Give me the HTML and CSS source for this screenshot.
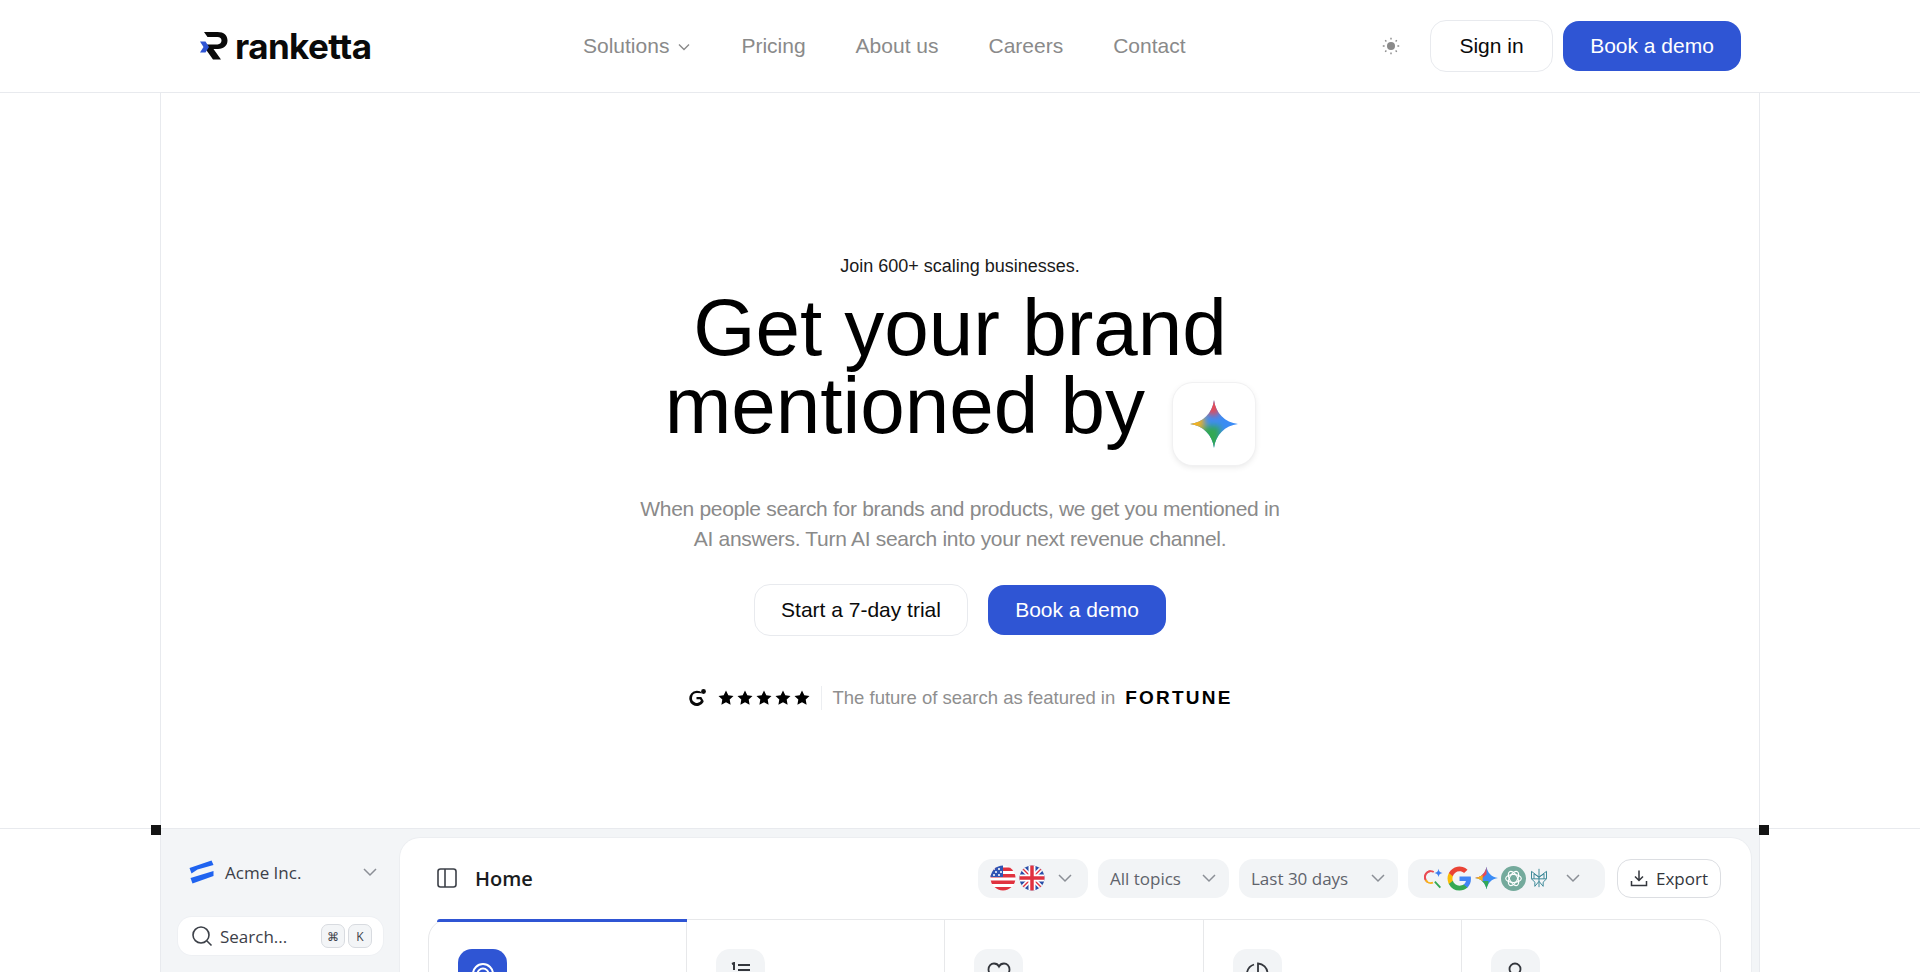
FILE: index.html
```html
<!DOCTYPE html>
<html lang="en">
<head>
<meta charset="utf-8">
<title>Ranketta</title>
<link rel="stylesheet" href="styles.css">
</head>
<body>
<header class="site-header">
  <div class="header-inner">
    <a class="logo" href="#">
      <svg class="logo-mark" viewBox="0 0 28 28" width="28" height="28" aria-hidden="true">
        <path d="M4 0H17.5C24 0 27.5 3.4 27.5 8.6C27.5 13.6 24 17 18 17H13.5L21 27.5H13L4.5 15.5V12.4H17.5C20 12.4 21.5 11 21.5 8.6C21.5 6.3 20 5 17.5 5H7.5Z" fill="#0a0a0a"/>
        <path d="M0 9.5H5.5L9 15L5.5 20.5H0L3.5 15Z" fill="#2f55d4"/>
      </svg>
      <span class="logo-text">ranketta</span>
    </a>
    <nav class="main-nav">
      <a href="#" class="nav-link">Solutions
        <svg class="nav-chevron" viewBox="0 0 14 14" width="14" height="14"><path d="M2 4.5L7 9.5L12 4.5" fill="none" stroke="#8a8a8a" stroke-width="1.4"/></svg>
      </a>
      <a href="#" class="nav-link">Pricing</a>
      <a href="#" class="nav-link">About us</a>
      <a href="#" class="nav-link">Careers</a>
      <a href="#" class="nav-link">Contact</a>
    </nav>
    <div class="header-actions">
      <svg class="sun" viewBox="0 0 18 18" width="18" height="18" aria-hidden="true">
        <circle cx="9" cy="9" r="4" fill="#8a8a8a"/>
        <path d="M9 .8V2.6M9 15.4V17.2M.8 9H2.6M15.4 9H17.2M3.2 3.2L4.4 4.4M13.6 13.6L14.8 14.8M3.2 14.8L4.4 13.6M13.6 4.4L14.8 3.2" stroke="#8a8a8a" stroke-width="1.4" fill="none"/>
      </svg>
      <a href="#" class="btn btn-outline btn-signin">Sign in</a>
      <a href="#" class="btn btn-primary">Book a demo</a>
    </div>
  </div>
</header>

<main>
  <section class="hero">
    <p class="eyebrow">Join 600+ scaling businesses.</p>
    <h1 class="headline">Get your brand<br>mentioned by <span class="gem-tile">
      <svg viewBox="0 0 48 48" width="48" height="48" aria-hidden="true">
        <defs>
          <clipPath id="gemclip"><path d="M24 0C25.500 13 35 22.500 48 24C35 25.500 25.500 35 24 48C22.500 35 13 25.500 0 24C13 22.500 22.500 13 24 0Z"/></clipPath>
          <filter id="gemblur" x="-30%" y="-30%" width="160%" height="160%"><feGaussianBlur stdDeviation="3"/></filter>
        </defs>
        <g clip-path="url(#gemclip)">
          <rect width="48" height="48" fill="#3b8cf5"/>
          <g filter="url(#gemblur)">
            <rect x="-4" y="-4" width="28" height="20" fill="#ea4a52" transform="rotate(20 24 24)"/>
            <rect x="-6" y="15" width="20" height="18" fill="#f6b21b"/>
            <rect x="10" y="26" width="20" height="26" fill="#33a853"/>
          </g>
        </g>
      </svg>
    </span></h1>
    <p class="lede">When people search for brands and products, we get you mentioned in AI answers. Turn AI search into your next revenue channel.</p>
    <div class="cta-row">
      <a href="#" class="btn btn-outline btn-trial">Start a 7-day trial</a>
      <a href="#" class="btn btn-primary">Book a demo</a>
    </div>
    <div class="proof">
      <svg class="g2" viewBox="0 0 20 20" width="20" height="20" aria-hidden="true">
        <path d="M15.500 5.200A7.600 7.600 0 1 0 16.700 13.700L14.300 12.200A4.900 4.900 0 1 1 10 5.100Z" fill="#0a0a0a"/>
        <path d="M10 11H14.800L17.400 15.500H14.900L13.500 13.300H10Z" fill="#0a0a0a" transform="translate(-.5 -2)"/>
        <circle cx="16.500" cy="3.500" r="2.400" fill="#0a0a0a"/>
      </svg>
      <div class="stars" aria-label="5 stars">
        <svg viewBox="0 0 16 16" width="16" height="16"><path class="star" d="M8 .6L10.300 5.300L15.500 6L11.700 9.600L12.600 14.800L8 12.300L3.400 14.800L4.300 9.600L.5 6L5.700 5.300Z"/></svg>
        <svg viewBox="0 0 16 16" width="16" height="16"><path class="star" d="M8 .6L10.300 5.300L15.500 6L11.700 9.600L12.600 14.800L8 12.300L3.400 14.800L4.300 9.600L.5 6L5.700 5.300Z"/></svg>
        <svg viewBox="0 0 16 16" width="16" height="16"><path class="star" d="M8 .6L10.300 5.300L15.500 6L11.700 9.600L12.600 14.800L8 12.300L3.400 14.800L4.300 9.600L.5 6L5.700 5.300Z"/></svg>
        <svg viewBox="0 0 16 16" width="16" height="16"><path class="star" d="M8 .6L10.300 5.300L15.500 6L11.700 9.600L12.600 14.800L8 12.300L3.400 14.800L4.300 9.600L.5 6L5.700 5.300Z"/></svg>
        <svg viewBox="0 0 16 16" width="16" height="16"><path class="star" d="M8 .6L10.300 5.300L15.500 6L11.700 9.600L12.600 14.800L8 12.300L3.400 14.800L4.300 9.600L.5 6L5.700 5.300Z"/></svg>
      </div>
      <span class="proof-text">The future of search as featured in</span>
      <span class="fortune">FORTUNE</span>
    </div>
  </section>

  <section class="dash-band">
    <span class="corner corner-l"></span>
    <span class="corner corner-r"></span>
    <div class="dash">
      <aside class="side">
        <div class="org">
          <svg viewBox="0 0 24 24" width="25" height="24" aria-hidden="true">
            <path d="M0 8L22 0.500L24 5L8 9.500L2 13.500Z" fill="#1f63f0"/>
            <path d="M1 18L24 11L24 16L3 23.500Z" fill="#1f63f0"/>
          </svg>
          <span class="org-name">Acme Inc.</span>
          <svg class="chev" viewBox="0 0 16 16" width="16" height="16"><path d="M2 5L8 11L14 5" fill="none" stroke="#8b8f96" stroke-width="1.500"/></svg>
        </div>
        <div class="search">
          <svg viewBox="0 0 22 22" width="22" height="22" aria-hidden="true"><circle cx="10" cy="10" r="8" fill="none" stroke="#3c4048" stroke-width="1.600"/><path d="M16 16L20.500 20.500" stroke="#3c4048" stroke-width="1.600"/></svg>
          <span class="search-label">Search...</span>
          <span class="kbd">⌘</span>
          <span class="kbd">K</span>
        </div>
      </aside>
      <div class="panel">
        <div class="panel-top">
          <svg class="panel-ic" viewBox="0 0 20 22" width="20" height="22" aria-hidden="true"><rect x="1" y="2" width="18" height="18" rx="2.500" fill="none" stroke="#3c4048" stroke-width="1.600"/><path d="M8 2V20" stroke="#3c4048" stroke-width="1.600"/></svg>
          <span class="panel-title">Home</span>
          <div class="filters">
            <div class="pill pill-flags">
              <svg viewBox="0 0 26 26" width="26" height="26" aria-hidden="true">
                <defs><clipPath id="flagc"><circle cx="13" cy="13" r="12.500"/></clipPath></defs>
                <g clip-path="url(#flagc)">
                  <rect width="26" height="26" fill="#fff"/>
                  <path d="M0 2.500H26V6H0ZM0 9H26V12.500H0ZM0 15.500H26V19H0ZM0 22H26V26H0Z" fill="#e0323f"/>
                  <rect width="13" height="12" fill="#2f55b4"/>
                  <path d="M3 4H5M8 4H10M5 7H7M10 7H12M3 10H5M8 10H10" stroke="#fff" stroke-width="1.300"/>
                </g>
              </svg>
              <svg viewBox="0 0 26 26" width="26" height="26" aria-hidden="true">
                <defs><clipPath id="flagu"><circle cx="13" cy="13" r="12.500"/></clipPath></defs>
                <g clip-path="url(#flagu)">
                  <rect width="26" height="26" fill="#2a4fa8"/>
                  <path d="M0 0L26 26M26 0L0 26" stroke="#fff" stroke-width="4.500"/>
                  <path d="M0 0L26 26M26 0L0 26" stroke="#e0323f" stroke-width="1.400"/>
                  <path d="M13 0V26M0 13H26" stroke="#fff" stroke-width="7"/>
                  <path d="M13 0V26M0 13H26" stroke="#e0323f" stroke-width="3.500"/>
                </g>
              </svg>
              <svg class="chev" viewBox="0 0 16 16" width="16" height="16"><path d="M2 5L8 11L14 5" fill="none" stroke="#8b8f96" stroke-width="1.500"/></svg>
            </div>
            <div class="pill pill-topics">All topics <svg class="chev" viewBox="0 0 16 16" width="16" height="16"><path d="M2 5L8 11L14 5" fill="none" stroke="#8b8f96" stroke-width="1.500"/></svg></div>
            <div class="pill pill-days">Last 30 days <svg class="chev" viewBox="0 0 16 16" width="16" height="16"><path d="M2 5L8 11L14 5" fill="none" stroke="#8b8f96" stroke-width="1.500"/></svg></div>
            <div class="pill pill-engines">
              <svg viewBox="0 0 24 24" width="22" height="24" aria-hidden="true">
                <circle cx="9.500" cy="11" r="6.500" fill="none" stroke="#ea4a52" stroke-width="2" stroke-dasharray="20 21" transform="rotate(120 9.500 11)"/>
                <path d="M9.500 4.500A6.500 6.500 0 0 0 4 14" fill="none" stroke="#ea4a52" stroke-width="2"/>
                <path d="M4 14A6.500 6.500 0 0 0 12 17" fill="none" stroke="#f6b21b" stroke-width="2"/>
                <path d="M14 16L20 22.500" stroke="#33a853" stroke-width="2"/>
                <path d="M18 2C18.500 5 19.500 6 22.500 6.500C19.500 7 18.500 8 18 11C17.500 8 16.500 7 13.500 6.500C16.500 6 17.500 5 18 2Z" fill="#3b7cf0"/>
              </svg>
              <svg viewBox="0 0 24 24" width="25" height="25" aria-hidden="true">
                <path d="M23 12.300c0-.8-.1-1.600-.2-2.300H12v4.400h6.200a5.300 5.300 0 0 1-2.300 3.500v2.900h3.700c2.200-2 3.400-5 3.400-8.500Z" fill="#4285f4"/>
                <path d="M12 23.500c3.100 0 5.700-1 7.600-2.800l-3.700-2.900c-1 .7-2.300 1.100-3.900 1.100-3 0-5.500-2-6.400-4.700H1.800v3A11.500 11.500 0 0 0 12 23.500Z" fill="#34a853"/>
                <path d="M5.600 14.200a6.900 6.900 0 0 1 0-4.400v-3H1.800a11.500 11.500 0 0 0 0 10.400Z" fill="#fbbc05"/>
                <path d="M12 5.100c1.700 0 3.200.6 4.400 1.700l3.300-3.300A11.500 11.500 0 0 0 1.800 6.800l3.800 3C6.500 7.100 9 5.100 12 5.100Z" fill="#ea4335"/>
              </svg>
              <svg viewBox="0 0 24 24" width="23" height="24" aria-hidden="true">
                <defs>
                  <clipPath id="gemclip2"><path d="M12 0C12.800 6.500 17.500 11.200 24 12C17.500 12.800 12.800 17.500 12 24C11.200 17.500 6.500 12.800 0 12C6.500 11.200 11.200 6.500 12 0Z"/></clipPath>
                </defs>
                <g clip-path="url(#gemclip2)">
                  <rect width="24" height="24" fill="#3b8cf5"/>
                  <path d="M0 0H12V8L8 12H0Z" fill="#ea4a52"/>
                  <path d="M0 9H8V15H0Z" fill="#f6b21b"/>
                  <path d="M5 15H14V24H5Z" fill="#33a853"/>
                </g>
              </svg>
              <svg viewBox="0 0 24 24" width="25" height="25" aria-hidden="true">
                <circle cx="12" cy="12" r="12" fill="#74aa9c"/>
                <g fill="none" stroke="#fff" stroke-width="1.100">
                  <ellipse cx="12" cy="12" rx="7.500" ry="3.800"/>
                  <ellipse cx="12" cy="12" rx="7.500" ry="3.800" transform="rotate(60 12 12)"/>
                  <ellipse cx="12" cy="12" rx="7.500" ry="3.800" transform="rotate(120 12 12)"/>
                </g>
              </svg>
              <svg viewBox="0 0 24 24" width="20" height="24" aria-hidden="true">
                <path d="M12 1V23M3 4L12 11L21 4M3 4V13L7 17V22L12 16L17 22V17L21 13V4M12 11L6 7V13M12 11L18 7V13M3 13H21" fill="none" stroke="#3f8a99" stroke-width="1.200"/>
              </svg>
              <svg class="chev" viewBox="0 0 16 16" width="16" height="16"><path d="M2 5L8 11L14 5" fill="none" stroke="#8b8f96" stroke-width="1.500"/></svg>
            </div>
            <div class="export">
              <svg viewBox="0 0 18 18" width="18" height="18" aria-hidden="true"><path d="M9 1.500V11M5 7.500L9 11.500L13 7.500M1.500 12V16.500H16.500V12" fill="none" stroke="#33363c" stroke-width="1.500"/></svg>
              Export
            </div>
          </div>
        </div>
        <div class="tabs">
          <div class="tab tab-active">
            <span class="tile tile-blue">
              <svg viewBox="0 0 24 24" width="24" height="24" aria-hidden="true"><circle cx="12" cy="12" r="10" fill="none" stroke="#fff" stroke-width="2"/><circle cx="12" cy="12" r="5.500" fill="none" stroke="#fff" stroke-width="2"/><circle cx="12" cy="12" r="1.500" fill="#fff"/></svg>
            </span>
          </div>
          <div class="tab">
            <span class="tile">
              <svg viewBox="0 0 24 24" width="24" height="24" aria-hidden="true"><path d="M3 2L5 1V8M9 3H21M9 8H21" fill="none" stroke="#33363c" stroke-width="2"/></svg>
            </span>
          </div>
          <div class="tab">
            <span class="tile">
              <svg viewBox="0 0 24 24" width="24" height="24" aria-hidden="true"><path d="M12 21C5 16 1.500 12 1.500 7.500C1.500 4 4 1.500 7 1.500C9 1.500 11 2.500 12 4.500C13 2.500 15 1.500 17 1.500C20 1.500 22.500 4 22.500 7.500C22.500 12 19 16 12 21Z" fill="none" stroke="#33363c" stroke-width="1.800"/></svg>
            </span>
          </div>
          <div class="tab">
            <span class="tile">
              <svg viewBox="0 0 24 24" width="24" height="24" aria-hidden="true"><path d="M9 2.500A10 10 0 1 0 21.500 15M13 1.500A10 10 0 0 1 22.500 11H13Z" fill="none" stroke="#33363c" stroke-width="1.800"/></svg>
            </span>
          </div>
          <div class="tab">
            <span class="tile">
              <svg viewBox="0 0 24 24" width="24" height="24" aria-hidden="true"><circle cx="12" cy="7" r="5.500" fill="none" stroke="#33363c" stroke-width="1.800"/><path d="M3 22C3 17 7 14 12 14C17 14 21 17 21 22" fill="none" stroke="#33363c" stroke-width="1.800"/></svg>
            </span>
          </div>
        </div>
      </div>
    </div>
  </section>
</main>
</body>
</html>
```
FILE: styles.css
```css
* { box-sizing: border-box; }
html, body { margin: 0; height: 972px; overflow: hidden; background: #fff; }
body { font-family: "Liberation Sans", Arial, sans-serif; color: #0a0a0a; }
a { text-decoration: none; color: inherit; }
p, h1 { margin: 0; }

.site-header { height: 93px; border-bottom: 1px solid #e8eaee; }
.header-inner { width: 1600px; height: 92px; margin: 0 auto; padding: 0 19px 0 40px; display: flex; align-items: center; position: relative; }
.logo { display: flex; align-items: center; gap: 7px; width: 383px; margin-top: -1px; }
.logo-mark { flex: none; }
.logo-text { font-family: Inter, sans-serif; font-weight: 700; font-size: 35px; line-height: 36px; letter-spacing: -.6px; color: #0a0a0a; }
.main-nav { display: flex; align-items: center; gap: 50px; font-size: 21px; }
.nav-link { color: #8a8a8a; display: flex; align-items: center; gap: 8px; line-height: 28px; }
.nav-chevron { margin-top: 2px; }
.header-actions { margin-left: auto; display: flex; align-items: center; gap: 10px; }
.sun { margin-right: 20px; }
.btn { display: flex; align-items: center; justify-content: center; font-size: 21px; border-radius: 16px; height: 50px; }
.btn-primary { width: 178px; background: #2f55d4; color: #fff; }
.btn-outline { background: #fff; border: 1px solid #e8eaee; color: #0a0a0a; height: 52px; }
.btn-signin { width: 123px; }
.btn-trial { width: 214px; }

.hero { width: 1600px; height: 735px; margin: 0 auto; border-left: 1px solid #e8eaee; border-right: 1px solid #e8eaee; display: flex; flex-direction: column; align-items: center; padding-top: 161px; }
.eyebrow { font-size: 18px; line-height: 24px; color: #1a1a1a; }
.headline { margin-top: 11px; font-weight: 400; font-size: 80px; line-height: 78px; text-align: center; color: #000; }
.gem-tile { display: inline-flex; vertical-align: -15px; width: 82px; height: 82px; margin-left: 6px; background: #fff; border-radius: 20px; align-items: center; justify-content: center; box-shadow: 0 0 0 1px #f1f1f2, 0 2px 6px rgba(0, 0, 0, .1); }
.lede { margin-top: 29px; width: 640px; text-align: center; font-size: 21px; line-height: 30px; color: #8a8a8a; letter-spacing: -.3px; }
.cta-row { margin-top: 30px; display: flex; align-items: center; gap: 20px; }
.proof { margin-top: 50px; display: flex; align-items: center; height: 24px; }
.g2 { margin-right: 11px; }
.stars { display: flex; gap: 3px; padding-right: 11px; margin-right: 10px; border-right: 1px solid #eceef1; height: 24px; align-items: center; }
.star { fill: #000; }
.proof-text { font-size: 18.500px; color: #8f8f8f; }
.fortune { margin-left: 10px; font-family: "Liberation Sans Narrow", "Liberation Sans", sans-serif; font-weight: 700; font-size: 19px; letter-spacing: 2.200px; color: #000; }

.dash-band { border-top: 1px solid #e8eaee; position: relative; height: 200px; margin-top: 0; }
.corner { position: absolute; top: -4px; width: 10px; height: 10px; background: #141414; }
.corner-l { left: 151px; }
.corner-r { left: 1759px; }
.dash { width: 1600px; height: 144px; margin: 0 auto; background: #f3f5f7; padding: 9px 8px 0 0; display: flex; border-left: 1px solid #e8eaee; border-right: 1px solid #e8eaee; }
.side { width: 239px; flex: none; padding: 0 17px; }
.org { display: flex; align-items: center; margin: 20px 0 0 11px; height: 28px; font-family: "Open Sans", sans-serif; }
.org-name { margin-left: 11px; font-size: 17px; color: #3c4048; flex: 1; }
.org .chev { margin-right: 5px; }
.search { margin-top: 31px; display: flex; align-items: center; height: 38px; background: #fff; border-radius: 14px; padding: 0 11px 0 13px; font-family: "Open Sans", sans-serif; font-size: 17px; color: #3c4048; box-shadow: 0 0 0 1px #eef0f3; }
.search-label { margin-left: 7px; flex: 1; }
.kbd { width: 24px; height: 24px; margin-left: 3px; display: flex; align-items: center; justify-content: center; border: 1px solid #d8dbe0; background: #f3f5f7; border-radius: 7px; font-size: 12px; }
.panel { flex: 1; background: #fff; border-radius: 20px 20px 0 0; box-shadow: 0 0 0 1px #eceef1; padding: 20px 30px 0 28px; }
.panel-top { display: flex; align-items: center; height: 40px; font-family: "Open Sans", sans-serif; }
.panel-ic { margin-left: 9px; }
.panel-title { margin-left: 18px; font-size: 20px; font-weight: 600; color: #1a1c20; }
.filters { margin-left: auto; display: flex; align-items: center; gap: 10px; }
.pill { height: 39px; display: flex; align-items: center; background: #f2f4f6; border-radius: 14px; padding: 0 12px; font-size: 17px; color: #5f636b; }
.pill svg + svg { margin-left: 3px; }
.pill-flags { width: 110px; }
.pill-flags .chev { margin-left: 12px; }
.pill-topics { width: 131px; justify-content: space-between; }
.pill-days { width: 159px; justify-content: space-between; }
.pill-engines { width: 197px; padding-left: 14px; }
.pill-engines .chev { margin-left: 16px; }
.export { margin-left: 2px; height: 39px; width: 104px; display: flex; align-items: center; justify-content: center; gap: 8px; border: 1px solid #dcdee2; border-radius: 14px; background: #fff; font-size: 17px; color: #33363c; }
.tabs { margin-top: 21px; display: grid; grid-template-columns: repeat(5, 1fr); height: 200px; border: 1px solid #e7e8ea; border-radius: 20px 20px 0 0; }
.tab { padding: 29px 0 0 29px; border-right: 1px solid #e7e8ea; }
.tab:last-child { border-right: 0; }
.tab-active { position: relative; border-top-left-radius: 20px; }
.tab-active::before { content: ""; position: absolute; left: 8px; right: -1px; top: -1px; height: 3px; background: #2f55d4; border-radius: 3px 0 0 0; }
.tile { width: 49px; height: 49px; display: flex; align-items: center; justify-content: center; border-radius: 14px; background: #f2f4f6; }
.tile-blue { background: #2f55d4; }
```
